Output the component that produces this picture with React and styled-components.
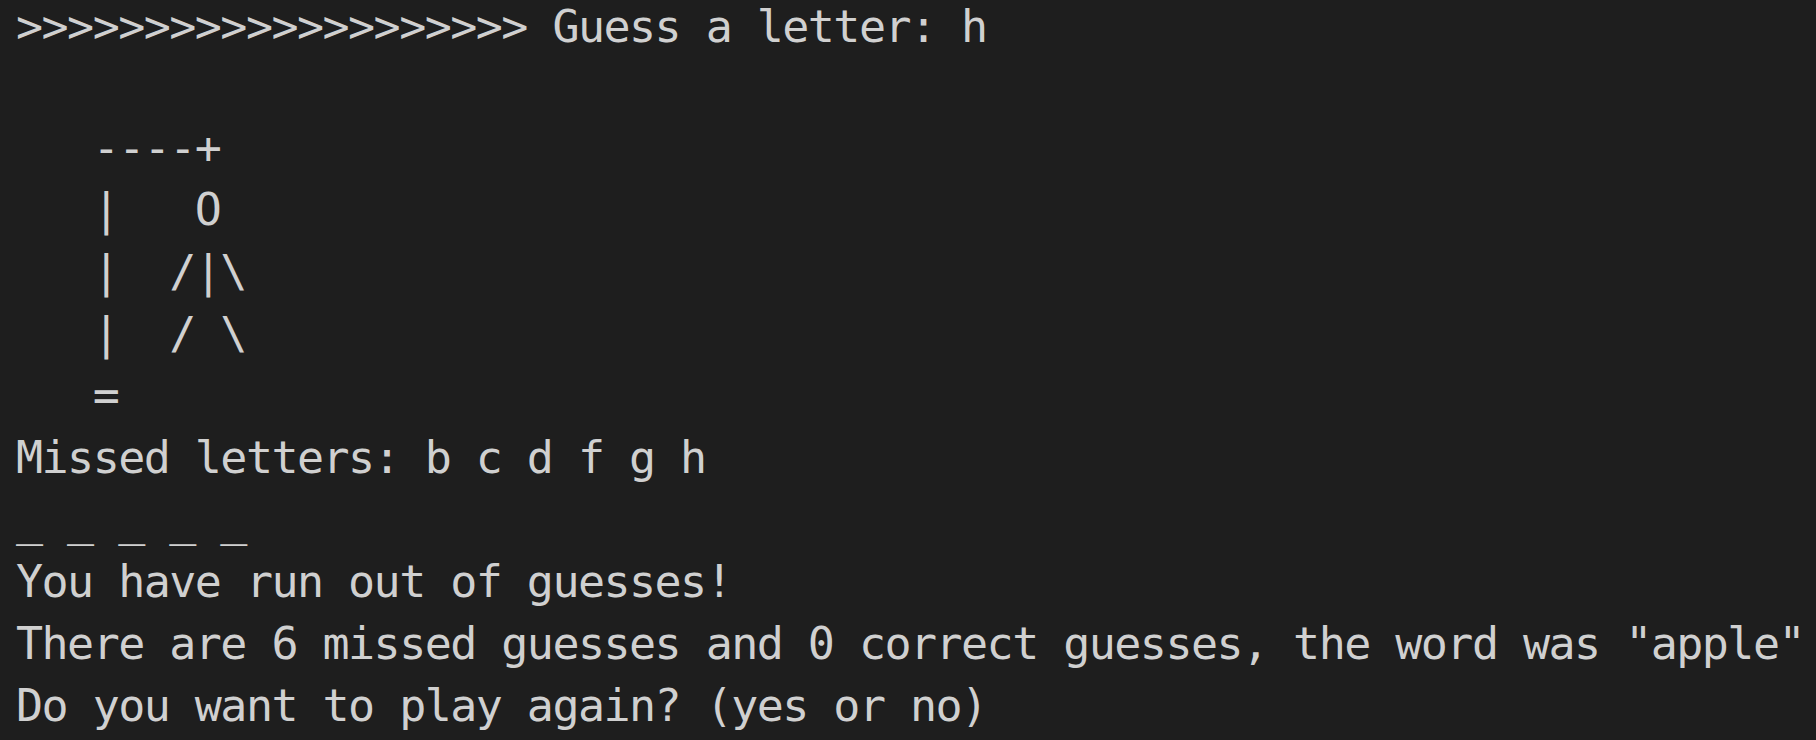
import React from 'react';
import styled, { createGlobalStyle } from 'styled-components';

const GlobalStyle = createGlobalStyle`
  html, body {
    margin: 0;
    padding: 0;
    background: #1e1e1e;
    height: 100%;
    overflow: hidden;
  }
`;

const Terminal = styled.div`
  width: 1816px;
  height: 740px;
  box-sizing: border-box;
  padding: 0 0 0 16px;
  background: #1e1e1e;
  color: #d0d0d0;
  font-family: 'DejaVu Sans Mono', 'Liberation Mono', monospace;
  font-size: 45px;
  letter-spacing: -1.55px;
  overflow: hidden;
`;

const Output = styled.div`
  display: flex;
  flex-direction: column;
`;

// the top row is partly scrolled out of view, so it is shorter
const Line = styled.div`
  height: ${(p) => (p.$top ? '55px' : '62px')};
  line-height: ${(p) => (p.$top ? '53px' : '62px')};
  white-space: pre;
`;

const lines = [
  '>>>>>>>>>>>>>>>>>>>> Guess a letter: h',
  '',
  '   ----+',
  '   |   O',
  '   |  /|\\',
  '   |  / \\',
  '   =',
  'Missed letters: b c d f g h',
  '_ _ _ _ _',
  'You have run out of guesses!',
  'There are 6 missed guesses and 0 correct guesses, the word was "apple"',
  'Do you want to play again? (yes or no)',
];

const App = () => (
  <>
    <GlobalStyle />
    <Terminal>
      <Output>
        {lines.map((text, index) => (
          <Line key={index} $top={index === 0}>
            {text}
          </Line>
        ))}
      </Output>
    </Terminal>
  </>
);

export default App;
